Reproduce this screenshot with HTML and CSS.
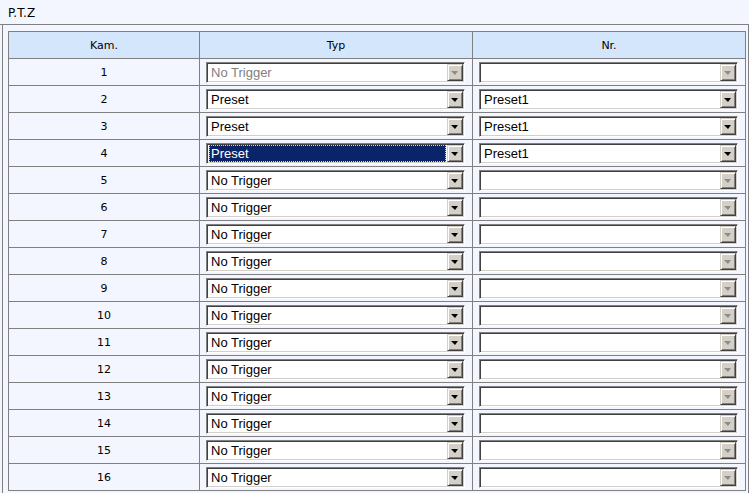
FILE: index.html
```html
<!DOCTYPE html>
<html>
<head>
<meta charset="utf-8">
<link rel="stylesheet" href="styles.css">
</head>
<body>
<div class="title">P.T.Z</div>
<div class="frame">
<table class="grid">
<colgroup><col class="c1"><col class="c2"><col class="c3"></colgroup>
<thead>
<tr><th>Kam.</th><th>Typ</th><th>Nr.</th></tr>
</thead>
<tbody>
<tr><td class="num">1</td><td><div class="sel disabled"><span class="val">No Trigger</span><span class="btn"></span></div></td><td><div class="sel disabled"><span class="val"></span><span class="btn"></span></div></td></tr>
<tr><td class="num">2</td><td><div class="sel"><span class="val">Preset</span><span class="btn"></span></div></td><td><div class="sel"><span class="val">Preset1</span><span class="btn"></span></div></td></tr>
<tr><td class="num">3</td><td><div class="sel"><span class="val">Preset</span><span class="btn"></span></div></td><td><div class="sel"><span class="val">Preset1</span><span class="btn"></span></div></td></tr>
<tr><td class="num">4</td><td><div class="sel focused"><span class="val">Preset</span><span class="btn"></span></div></td><td><div class="sel"><span class="val">Preset1</span><span class="btn"></span></div></td></tr>
<tr><td class="num">5</td><td><div class="sel"><span class="val">No Trigger</span><span class="btn"></span></div></td><td><div class="sel disabled"><span class="val"></span><span class="btn"></span></div></td></tr>
<tr><td class="num">6</td><td><div class="sel"><span class="val">No Trigger</span><span class="btn"></span></div></td><td><div class="sel disabled"><span class="val"></span><span class="btn"></span></div></td></tr>
<tr><td class="num">7</td><td><div class="sel"><span class="val">No Trigger</span><span class="btn"></span></div></td><td><div class="sel disabled"><span class="val"></span><span class="btn"></span></div></td></tr>
<tr><td class="num">8</td><td><div class="sel"><span class="val">No Trigger</span><span class="btn"></span></div></td><td><div class="sel disabled"><span class="val"></span><span class="btn"></span></div></td></tr>
<tr><td class="num">9</td><td><div class="sel"><span class="val">No Trigger</span><span class="btn"></span></div></td><td><div class="sel disabled"><span class="val"></span><span class="btn"></span></div></td></tr>
<tr><td class="num">10</td><td><div class="sel"><span class="val">No Trigger</span><span class="btn"></span></div></td><td><div class="sel disabled"><span class="val"></span><span class="btn"></span></div></td></tr>
<tr><td class="num">11</td><td><div class="sel"><span class="val">No Trigger</span><span class="btn"></span></div></td><td><div class="sel disabled"><span class="val"></span><span class="btn"></span></div></td></tr>
<tr><td class="num">12</td><td><div class="sel"><span class="val">No Trigger</span><span class="btn"></span></div></td><td><div class="sel disabled"><span class="val"></span><span class="btn"></span></div></td></tr>
<tr><td class="num">13</td><td><div class="sel"><span class="val">No Trigger</span><span class="btn"></span></div></td><td><div class="sel disabled"><span class="val"></span><span class="btn"></span></div></td></tr>
<tr><td class="num">14</td><td><div class="sel"><span class="val">No Trigger</span><span class="btn"></span></div></td><td><div class="sel disabled"><span class="val"></span><span class="btn"></span></div></td></tr>
<tr><td class="num">15</td><td><div class="sel"><span class="val">No Trigger</span><span class="btn"></span></div></td><td><div class="sel disabled"><span class="val"></span><span class="btn"></span></div></td></tr>
<tr><td class="num">16</td><td><div class="sel"><span class="val">No Trigger</span><span class="btn"></span></div></td><td><div class="sel disabled"><span class="val"></span><span class="btn"></span></div></td></tr>
</tbody>
</table>
</div>
</body>
</html>
```
FILE: styles.css
```css
html, body {
  margin: 0;
  padding: 0;
  background: #f3f6fe;
  font-family: "DejaVu Sans", Tahoma, sans-serif;
  font-size: 11px;
  color: #000;
  overflow: hidden;
}
.title {
  height: 24px;
  line-height: 26px;
  padding-left: 8px;
  font-size: 12px;
  border-bottom: 1px solid #808080;
}
.frame {
  margin-left: 2px;
  border-left: 1px solid #808080;
  border-right: 1px solid #808080;
  padding: 6px 2px 10px 5px;
}
.grid {
  border-collapse: separate;
  border-spacing: 1px;
  background: #808080;
  table-layout: fixed;
  width: 738px;
}
.c1 { width: 190px; }
.c2 { width: 272px; }
.c3 { width: 272px; }
.grid th {
  background: #d4e6fc;
  font-weight: normal;
  height: 26px;
  padding: 0;
  text-align: center;
}
.grid td {
  background: #f3f6fe;
  height: 26px;
  padding: 0;
}
.grid td.num { text-align: center; }
.sel {
  display: flex;
  align-items: center;
  box-sizing: border-box;
  width: 259px;
  height: 21px;
  margin: 1px 0 0 6px;
  background: #fff;
  border: 1px solid;
  border-color: #808080 #fff #fff #808080;
  box-shadow: inset 1px 1px 0 #404040, inset -1px -1px 0 #d4d0c8;
  padding: 1px;
  font-family: "Liberation Sans", Arial, sans-serif;
  font-size: 13px;
}
.val {
  flex: 1;
  height: 17px;
  line-height: 17px;
  padding-left: 2px;
  margin-left: 1px;
  margin-right: 1px;
  white-space: nowrap;
  overflow: hidden;
}
.btn {
  position: relative;
  box-sizing: border-box;
  width: 16px;
  height: 17px;
  background: #d4d0c8;
  border: 1px solid;
  border-color: #d4d0c8 #404040 #404040 #d4d0c8;
  box-shadow: inset 1px 1px 0 #fff, inset -1px -1px 0 #808080;
}
.btn::after {
  content: "";
  position: absolute;
  left: 3px;
  top: 6px;
  border-left: 4px solid transparent;
  border-right: 3px solid transparent;
  border-top: 4px solid #000;
}
.disabled .val { color: #808080; }
.disabled .btn::after { border-top-color: #8c8c8c; }
.focused .val {
  background: #0a246a;
  color: #fff;
  box-sizing: border-box;
  height: 17px;
  line-height: 15px;
  padding-left: 1px;
  border: 1px dotted #d8d890;
}
```
